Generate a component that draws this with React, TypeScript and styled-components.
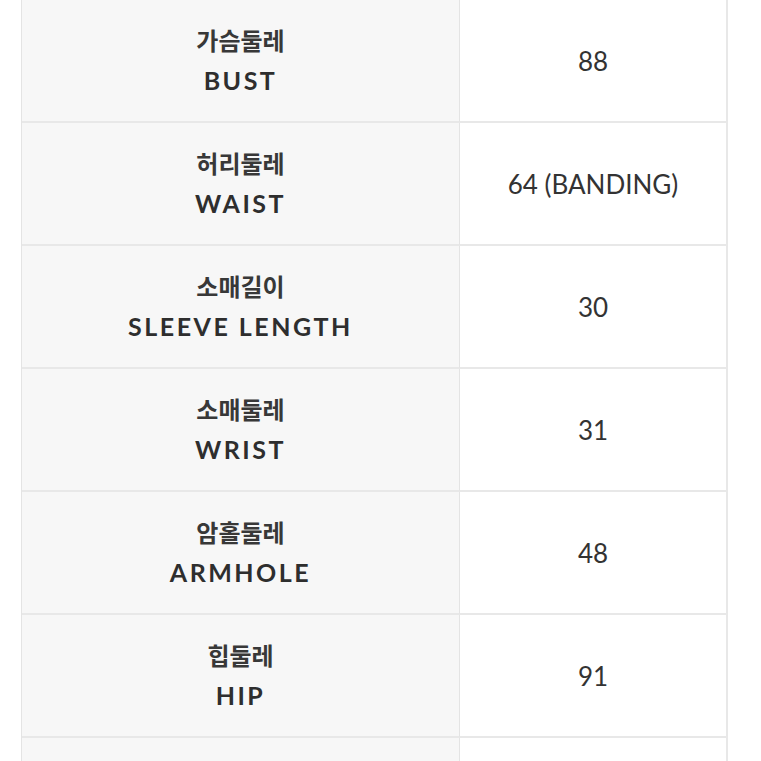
import { Fragment } from "react";
import styled, { createGlobalStyle } from "styled-components";

const GlobalStyle = createGlobalStyle`
  html, body {
    margin: 0;
    padding: 0;
    background: #ffffff;
    overflow: hidden;
  }
  body {
    font-family: Lato, "Noto Sans CJK KR", sans-serif;
    color: #333333;
  }
`;

const Page = styled.div`
  padding: 0 33px 0 21px;
  margin-top: -1px;
`;

const Table = styled.div`
  display: grid;
  grid-template-columns: 438px 268px;
  border-left: 1px solid #e4e4e4;
  border-top: 1px solid #e4e4e4;
`;

const LabelCell = styled.div`
  height: 123px;
  box-sizing: border-box;
  background: #f7f7f7;
  border-right: 1px solid #e4e4e4;
  border-bottom: 2px solid #e8e8e8;
  display: flex;
  flex-direction: column;
  align-items: center;
  justify-content: center;
  padding-bottom: 2px;
`;

const ValueCell = styled.div`
  height: 123px;
  box-sizing: border-box;
  background: #ffffff;
  border-right: 2px solid #e8e8e8;
  border-bottom: 2px solid #e8e8e8;
  display: flex;
  align-items: center;
  justify-content: center;
  font-family: Lato, sans-serif;
  font-size: 26px;
  color: #333333;
`;

const KoName = styled.span`
  font-family: "Noto Sans CJK KR", sans-serif;
  font-weight: 700;
  font-size: 24px;
  line-height: 40px;
  color: #383838;
`;

const EnName = styled.span`
  font-family: Lato, sans-serif;
  font-weight: 700;
  font-size: 25px;
  line-height: 40px;
  letter-spacing: 2.5px;
  color: #2e2e2e;
`;

const rows = [
  { ko: "가슴둘레", en: "BUST", value: "88" },
  { ko: "허리둘레", en: "WAIST", value: "64 (BANDING)" },
  { ko: "소매길이", en: "SLEEVE LENGTH", value: "30" },
  { ko: "소매둘레", en: "WRIST", value: "31" },
  { ko: "암홀둘레", en: "ARMHOLE", value: "48" },
  { ko: "힙둘레", en: "HIP", value: "91" },
  { ko: "", en: "", value: "" },
];

export default function App() {
  return (
    <>
      <GlobalStyle />
      <Page>
        <Table>
          {rows.map((row, i) => (
            <Fragment key={i}>
              <LabelCell>
                {row.ko && <KoName>{row.ko}</KoName>}
                {row.en && <EnName>{row.en}</EnName>}
              </LabelCell>
              <ValueCell>{row.value}</ValueCell>
            </Fragment>
          ))}
        </Table>
      </Page>
    </>
  );
}
